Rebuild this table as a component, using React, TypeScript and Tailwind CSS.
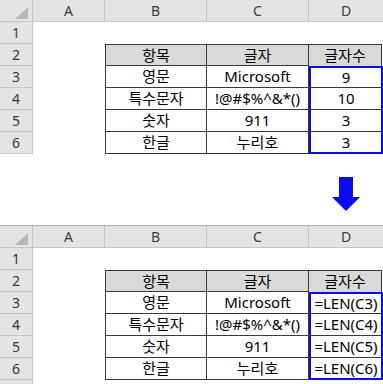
import React from "react";

const FONT = '"Noto Sans", "Noto Sans CJK KR", sans-serif';

const rows = [
    { item: "영문", text: "Microsoft", num: "9", formula: "=LEN(C3)" },
    { item: "특수문자", text: "!@#$%^&*()", num: "10", formula: "=LEN(C4)" },
    { item: "숫자", text: "911", num: "3", formula: "=LEN(C5)" },
    { item: "한글", text: "누리호", num: "3", formula: "=LEN(C6)" },
];

const cols = "grid grid-cols-[33px_72px_102px_102px_74px]";

function RowHead({ n }: { n?: number }) {
    return (
        <div className="h-[22px] bg-[#e4e4e4] border-r border-b border-[#c6c6c6] flex items-center justify-center text-[14px] text-[#3b3b3b]">
            {n}
        </div>
    );
}

function Sheet({ formulas, topLine }: { formulas: boolean; topLine: boolean }) {
    return (
        <div className={topLine ? "border-t border-[#b4b4b4]" : ""}>
            {/* column headers */}
            <div className={`${cols} h-[22px]`}>
                <div className="relative bg-[#e4e4e4] border-r border-b border-[#c6c6c6]">
                    <svg className="absolute left-[15px] top-[7px]" width="13" height="12" viewBox="0 0 13 12">
                        <polygon points="13,0 13,12 0,12" fill="#b9b9b9" />
                    </svg>
                </div>
                {["A", "B", "C", "D"].map(c => (
                    <div
                        key={c}
                        className="bg-[#e4e4e4] border-r border-b border-[#c6c6c6] flex items-center justify-center text-[14px] text-[#3b3b3b] last:border-r-0"
                    >
                        {c}
                    </div>
                ))}
            </div>

            {/* row 1 */}
            <div className={cols}>
                <RowHead n={1} />
                <div className="col-span-4" />
            </div>

            {/* row 2 - table header */}
            <div className={cols}>
                <RowHead n={2} />
                <div />
                <div className="h-[22px] bg-[#d9d9d9] border border-[#3a3a3a] flex items-center justify-center">항목</div>
                <div className="h-[22px] bg-[#d9d9d9] border-y border-r border-[#3a3a3a] flex items-center justify-center">글자</div>
                <div className="h-[22px] bg-[#d9d9d9] border-t border-r border-[#3a3a3a] flex items-center justify-center mr-[1px]">글자수</div>
            </div>

            {rows.map((r, i) => {
                const last = i === rows.length - 1;
                return (
                    <div key={i} className={cols}>
                        <RowHead n={i + 3} />
                        <div />
                        <div className="h-[22px] border-x border-b border-[#3a3a3a] flex items-center justify-center">{r.item}</div>
                        <div className="h-[22px] border-r border-b border-[#3a3a3a] flex items-center justify-center whitespace-nowrap">{r.text}</div>
                        <div
                            className={
                                "h-[22px] border-x-2 border-[#0b0bf0] flex items-center justify-center whitespace-nowrap " +
                                (i === 0 ? "border-t-2 " : "") +
                                (last ? "border-b-2" : "border-b border-b-[#3a3a3a]")
                            }
                        >
                            {formulas ? r.formula : r.num}
                        </div>
                    </div>
                );
            })}
        </div>
    );
}

export default function App() {
    return (
        <div className="w-[383px] h-[384px] overflow-hidden bg-white text-black text-[15px] leading-none" style={{ fontFamily: FONT }}>
            <Sheet formulas={false} topLine={false} />

            {/* arrow between the two sheets */}
            <div className={`${cols} h-[71px]`}>
                <div className="col-span-4" />
                <div className="flex justify-center pt-[23px]">
                    <svg width="28" height="34" viewBox="0 0 28 34">
                        <polygon points="7,0 21,0 21,20 28,20 14,34 0,20 7,20" fill="#0b0bf0" />
                    </svg>
                </div>
            </div>

            <Sheet formulas={true} topLine={true} />
            <div className={cols}>
                <RowHead />
            </div>
        </div>
    );
}
